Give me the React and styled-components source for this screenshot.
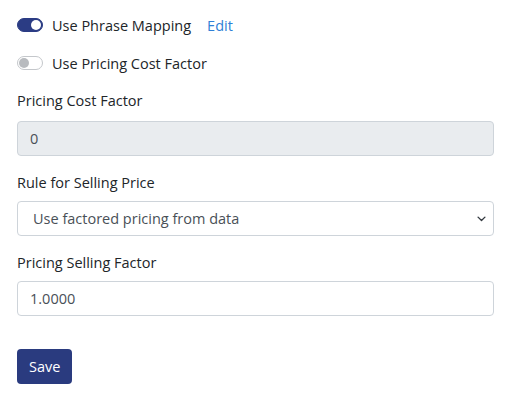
import React from "react";
import styled, { createGlobalStyle } from "styled-components";

const Global = createGlobalStyle`
  body {
    margin: 0;
    background: #fff;
    font-family: "Open Sans", "Noto Sans", sans-serif;
    color: #212529;
  }
`;

const Form = styled.form`
  padding: 14px 21px 14px 17px;
  display: flex;
  flex-direction: column;
`;

const SwitchRow = styled.div`
  display: flex;
  align-items: center;
  height: 22px;
  margin-top: ${(p) => p.top || 0}px;
  font-size: 14.5px;
`;

const Track = styled.span`
  position: relative;
  width: 26px;
  height: 14px;
  border-radius: 8px;
  box-sizing: border-box;
  margin-right: 9px;
  background: ${(p) => (p.on ? "#2b3c84" : "#fff")};
  border: 1px solid ${(p) => (p.on ? "#2b3c84" : "#c4c7cb")};
  &::after {
    content: "";
    position: absolute;
    top: 1px;
    left: ${(p) => (p.on ? "13px" : "1px")};
    width: 10px;
    height: 10px;
    border-radius: 50%;
    background: ${(p) => (p.on ? "#fff" : "#b8bbbf")};
  }
`;

const EditLink = styled.a`
  color: #2f7fd6;
  margin-left: 16px;
  text-decoration: none;
`;

const Label = styled.label`
  display: block;
  font-size: 14.5px;
  margin-top: ${(p) => p.top || 0}px;
  margin-bottom: ${(p) => p.gap || 9}px;
`;

const Field = styled.div`
  box-sizing: border-box;
  height: 35px;
  border: 1px solid #ced4da;
  border-radius: 4px;
  background: ${(p) => (p.disabled ? "#e9ecef" : "#fff")};
  display: flex;
  align-items: center;
  justify-content: space-between;
  padding: 0 ${(p) => (p.select ? 6 : 10)}px 0 ${(p) => (p.select ? 15 : 12)}px;
  font-size: 14.5px;
  color: #495057;
`;

const Chevron = styled.svg`
  width: 11px;
  height: 11px;
`;

const Button = styled.button`
  align-self: flex-start;
  margin-top: 33px;
  height: 35px;
  padding: 0 12px;
  border: none;
  border-radius: 4px;
  background: #2a3b7f;
  color: #fff;
  font-family: inherit;
  font-size: 14.5px;
`;

export default function App() {
  return (
    <>
      <Global />
      <Form>
        <SwitchRow>
          <Track on />
          Use Phrase Mapping
          <EditLink href="#">Edit</EditLink>
        </SwitchRow>
        <SwitchRow top={16}>
          <Track />
          Use Pricing Cost Factor
        </SwitchRow>
        <Label top={17} gap={11}>Pricing Cost Factor</Label>
        <Field disabled>0</Field>
        <Label top={17}>Rule for Selling Price</Label>
        <Field select>
          Use factored pricing from data
          <Chevron viewBox="0 0 16 16">
            <path d="M3 6l5 5 5-5" fill="none" stroke="#343a40" strokeWidth="2" strokeLinecap="round" strokeLinejoin="round" />
          </Chevron>
        </Field>
        <Label top={17}>Pricing Selling Factor</Label>
        <Field>1.0000</Field>
        <Button type="button">Save</Button>
      </Form>
    </>
  );
}
